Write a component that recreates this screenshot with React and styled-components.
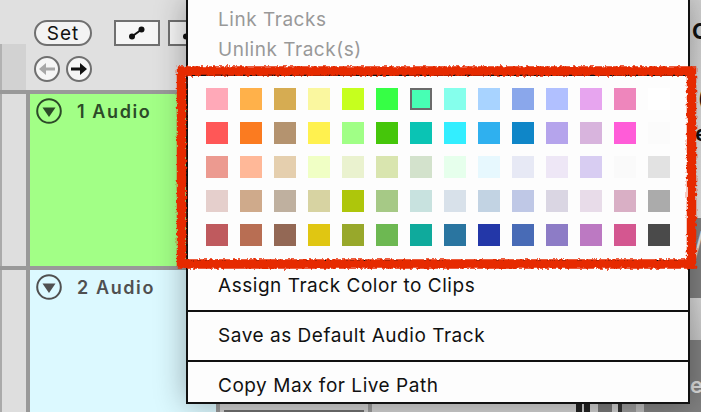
import React from "react";
import styled, { createGlobalStyle } from "styled-components";

const Global = createGlobalStyle`
  html, body { margin: 0; padding: 0; background: #e0e0e0; }
  * { box-sizing: border-box; }
`;

const PALETTE = [
  ["#FFA9B8","#FFB14A","#D6AC52","#FAF79F","#C6FF1E","#36FF45","#47FFB4","#85FFEC","#A8D3FF","#8AA7EB","#B1C0FF","#E7A5EF","#EE86BC","#FFFFFF"],
  ["#FF5757","#FB7B20","#B4936F","#FFF14F","#A0FF86","#45C60A","#0AC4B4","#33EEFF","#2FB0EF","#0F86C8","#B5A4EC","#D8B4DD","#FF5CD8","#FBFBFB"],
  ["#EC9A90","#FFB898","#E5CFAE","#F0FFC5","#EAF2CF","#D9E5AF","#D3E2CC","#E6FFEC","#E7F8FE","#E7E9F5","#EEE7F6","#D8CDF2","#FAFAFA","#E2E2E2"],
  ["#E5CFCC","#CFAA8B","#BFB09F","#D7D3A2","#AEC60B","#A6C986","#C8E2DF","#D8E1EA","#C2D3E3","#BFC8E6","#DAD6E3","#E8DCE9","#D9AFC5","#ABABAB"],
  ["#BF5A5E","#B86E53","#936855","#E0C612","#98A82B","#6DB852","#0FAA9C","#2A75A0","#2337A8","#486BB6","#8D7CC6","#BC79C2","#D45790","#4A4A4A"],
].flat();

const METER = [
  [6,"#222"],[2,"#ccc"],[6,"#222"],[8,"#ccc"],[14,"#777"],[6,"#ccc"],[4,"#333"],[14,"#999"],[8,"#bbb"],
];

const FONT = `"Inter", "Liberation Sans", sans-serif`;

const Page = styled.div`
  position: relative; width: 701px; height: 412px; overflow: hidden;
  display: flex; font-family: ${FONT};
`;
const Left = styled.div`width: 644px; display: flex; flex-direction: column; flex: none;`;
const Header = styled.div`
  height: 90px; flex: none; display: flex; background: #e0e0e0;
`;
const Corner = styled.div`
  width: 26px; height: 46px; margin-top: 44px; flex: none;
  background: #d2d2d2; border-left: 2px solid #b2b2b2;
`;
const Controls = styled.div`
  padding: 20px 0 0 8px; display: flex; flex-direction: column; gap: 10px;
`;
const ControlRow = styled.div`display: flex; align-items: center; gap: ${p => p.$gap}px;`;
const SetButton = styled.div`
  width: 58px; height: 26px; border: 2px solid #707070; border-radius: 13px;
  margin-right: 14px;
  background: #f3f3f3; color: #111; font-size: 19px; letter-spacing: 1px;
  display: flex; align-items: center; justify-content: center;
`;
const SquareButton = styled.div`
  width: 46px; height: 26px; border: 2px solid #707070; background: #f6f6f6;
  display: flex; align-items: center; justify-content: center;
`;
const Divider = styled.div`height: 4px; flex: none; background: #999;`;
const TrackRow = styled.div`
  display: flex; flex: none; height: ${p => p.$h}px;
`;
const Gutter = styled.div`
  width: 30px; flex: none; background: #dedede;
  border-left: 2px solid #aaa; border-right: 4px solid #999;
`;
const Title = styled.div`
  width: 186px; flex: none; background: ${p => p.$bg}; color: ${p => p.$fg};
  padding: 4px 0 0 6px; display: flex; gap: 15px;
  font-size: 18px; font-weight: 600; letter-spacing: 1.6px; line-height: 28px;
`;
const Mixer = styled.div`
  width: 156px; flex: none; background: #cfcfcf;
  border-left: 4px solid #999; border-right: 4px solid #999;
  padding: 0 4px; display: flex; flex-direction: column; justify-content: flex-end;
`;
const MixerBar = styled.div`height: 2px; background: #707070;`;
const Rest = styled.div`
  flex: 1; background: #d0d0d0; padding-left: 204px; display: flex;
`;
const Seg = styled.div`width: ${p => p.$w}px; background: ${p => p.$c}; flex: none;`;

const Right = styled.div`flex: 1; display: flex; flex-direction: column;`;
const RightTop = styled.div`
  height: 218px; flex: none; padding: 17px 0 0 48px; color: #111;
  background: linear-gradient(#d0d0d0, #e2e2e2);
  font-size: 22px; font-weight: 700; line-height: 28px; overflow: hidden;
`;
const RightGlyph = styled.div`margin-top: ${p => p.$mt}px; margin-left: ${p => p.$ml}px;`;
const RightBottom = styled.div`
  flex: 1; background: #808080; display: flex; flex-direction: column; overflow: hidden;
`;
const Wedge = styled.div`
  height: 80px; flex: none; padding-left: 47px; color: #e4e4e4;
  font-size: 38px; line-height: 56px; font-weight: 300;
`;
const LightBar = styled.div`height: 42px; flex: none; margin-left: 46px; background: linear-gradient(#d8d8d8,#c8c8c8);`;
const SmallE = styled.div`
  margin: 32px 0 0 46px; color: #dcdcdc; font-size: 22px; line-height: 26px; font-weight: 600;
`;

const Menu = styled.div`
  position: absolute; left: 186px; top: 0; width: 504px; height: 404px;
  background: #fdfdfd; border: 2px solid #111; border-top: 0;
  box-shadow: 0 0 30px rgba(0,0,0,.32);
  display: flex; flex-direction: column;
  font-size: 19px; color: #111; letter-spacing: .53px;
`;
const Disabled = styled.div`
  height: 30px; padding-left: 30px; color: #999; line-height: 32px; flex: none;
  &:first-child { margin-top: 4px; }
`;
const Palette = styled.div`
  margin-top: 10px; flex: none; height: 188px; padding: 12px 0 0 18px;
  border-top: 2px solid #111; border-bottom: 2px solid #111;
  display: grid; grid-template-columns: repeat(14, 22px); grid-auto-rows: 22px; gap: 12px;
`;
const Swatch = styled.div`
  background: ${p => p.$c};
  border: ${p => p.$active ? "2px solid #6b6b6b" : "0"};
`;
const Item = styled.div`
  height: ${p => p.$h}px; flex: none;
  padding: ${p => p.$pt || 0}px 0 ${p => p.$pb || 0}px 30px;
  display: flex; align-items: center;
  border-bottom: ${p => p.$last ? "0" : "2px solid #111"};
`;

const Scribble = styled.svg`
  position: absolute; left: 0; top: 0; pointer-events: none;
`;

const Disclosure = ({ color }) => (
  <svg width="26" height="26" viewBox="0 0 26 26" style={{ flex: "none" }}>
    <circle cx="13" cy="13" r="11.8" fill="none" stroke={color} strokeWidth="2" />
    <path d="M6.5 9.5h13L13 19z" fill={color} />
  </svg>
);

const Arrow = ({ dir, color }) => (
  <svg width="26" height="26" viewBox="0 0 26 26">
    <circle cx="13" cy="13" r="12" fill="#f6f6f6" stroke="#707070" strokeWidth="2" />
    <path
      d={dir === "left" ? "M5 13l7-6v4.6h9v2.8h-9V19z" : "M21 13l-7-6v4.6H5v2.8h9V19z"}
      fill={color}
    />
  </svg>
);

export default function App() {
  return (
    <Page>
      <Global />
      <Left>
        <Header>
          <Corner />
          <Controls>
            <ControlRow $gap={8}>
              <SetButton>Set</SetButton>
              <SquareButton>
                <svg width="18" height="14" viewBox="0 0 18 14">
                  <path d="M4 10.5L13.5 3.5" stroke="#111" strokeWidth="2" />
                  <circle cx="4" cy="10.5" r="3" fill="#111" />
                  <circle cx="13.5" cy="3.5" r="3" fill="#111" />
                </svg>
              </SquareButton>
              <SquareButton>
                <svg width="18" height="14" viewBox="0 0 18 14">
                  <circle cx="4" cy="10.5" r="3" fill="#111" />
                </svg>
              </SquareButton>
            </ControlRow>
            <ControlRow $gap={6}>
              <Arrow dir="left" color="#a8a8a8" />
              <Arrow dir="right" color="#111" />
            </ControlRow>
          </Controls>
        </Header>
        <Divider />
        <TrackRow $h={172}>
          <Gutter />
          <Title $bg="#A2FF86" $fg="#2c4a28">
            <Disclosure color="#2c4a28" />
            1 Audio
          </Title>
          <Mixer />
          <Rest />
        </TrackRow>
        <Divider />
        <TrackRow $h={142}>
          <Gutter />
          <Title $bg="#DCF9FF" $fg="#505050">
            <Disclosure color="#505050" />
            2 Audio
          </Title>
          <Mixer><MixerBar /></Mixer>
          <Rest>
            {METER.map(([w, c], i) => <Seg key={i} $w={w} $c={c} />)}
          </Rest>
        </TrackRow>
      </Left>
      <Right>
        <RightTop>
          C
          <RightGlyph $mt={39} $ml={6}>(</RightGlyph>
          <RightGlyph $mt={7} $ml={3}>e</RightGlyph>
        </RightTop>
        <RightBottom>
          <Wedge>/</Wedge>
          <LightBar />
          <SmallE>e</SmallE>
        </RightBottom>
      </Right>

      <Menu>
        <Disabled>Link Tracks</Disabled>
        <Disabled>Unlink Track(s)</Disabled>
        <Palette>
          {PALETTE.map((c, i) => <Swatch key={i} $c={c} $active={i === 6} />)}
        </Palette>
        <Item $h={50} $pb={2}>Assign Track Color to Clips</Item>
        <Item $h={50} $pb={2}>Save as Default Audio Track</Item>
        <Item $h={40} $pt={6} $last>Copy Max for Live Path</Item>
      </Menu>

      <Scribble width="701" height="412" viewBox="0 0 701 412">
        <defs>
          <filter id="rough" x="-5%" y="-5%" width="110%" height="110%">
            <feTurbulence type="fractalNoise" baseFrequency="0.3" numOctaves="3" seed="4" result="n" />
            <feDisplacementMap in="SourceGraphic" in2="n" scale="4.5" xChannelSelector="R" yChannelSelector="G" result="d" />
            <feGaussianBlur in="d" stdDeviation="0.45" />
          </filter>
        </defs>
        <rect x="181.5" y="71" width="510" height="193" fill="none" stroke="#E62A00" strokeWidth="9.5" filter="url(#rough)" />
      </Scribble>
    </Page>
  );
}
